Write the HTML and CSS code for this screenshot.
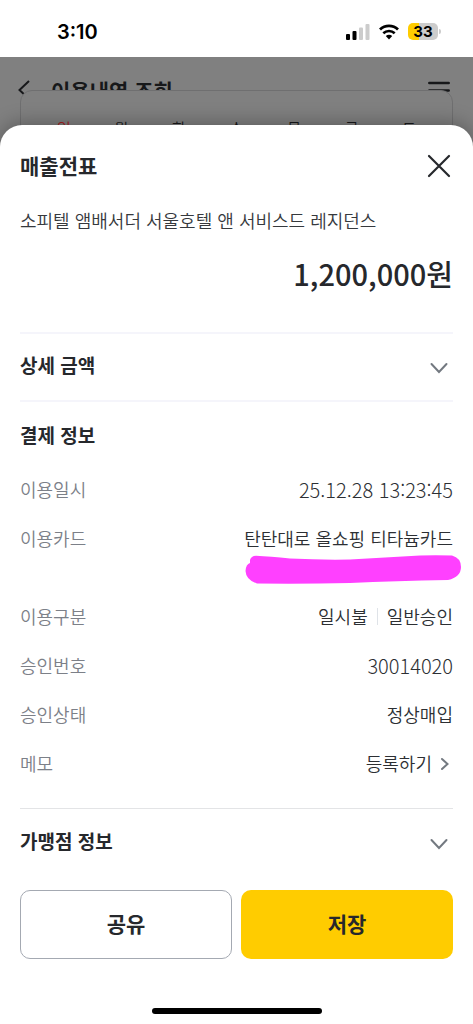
FILE: index.html
```html
<!DOCTYPE html>
<html lang="ko">
<head>
<meta charset="utf-8">
<meta name="viewport" content="width=device-width, initial-scale=1">
<title>매출전표</title>
<link rel="stylesheet" href="styles.css">
</head>
<body>
<div class="status">
  <time class="clock">3:10</time>
  <div class="indicators">
    <svg width="24" height="16" viewBox="0 0 24 16" aria-hidden="true">
      <rect x="0" y="10" width="4" height="6" rx="1"/>
      <rect x="6.5" y="7" width="4" height="9" rx="1"/>
      <rect x="13" y="3.5" width="4" height="12.5" rx="1" fill="#ccc"/>
      <rect x="19.5" y="0" width="4" height="16" rx="1" fill="#ccc"/>
    </svg>
    <svg width="20" height="16" viewBox="0 0 20 16" aria-hidden="true">
      <path d="M1 5.400C6 .6 14 .6 19 5.400" fill="none" stroke="#000" stroke-width="2.800"/>
      <path d="M4.300 9.200C7.500 6.200 12.500 6.200 15.700 9.200" fill="none" stroke="#000" stroke-width="2.600"/>
      <path d="M6.800 12.100C8.600 10.300 11.400 10.300 13.200 12.100L10 15.400Z"/>
    </svg>
    <div class="battery"><span class="level">33</span><i class="tip"></i></div>
  </div>
</div>

<div class="behind" aria-hidden="true">
  <div class="topbar">
    <svg width="12" height="20" viewBox="0 0 12 20" fill="none" stroke="#17181a" stroke-width="2"><path d="M11 1L1.500 10L11 19"/></svg>
    <span class="page-name">이용내역 조회</span>
    <svg width="22" height="18" viewBox="0 0 22 18" stroke="#17181a" stroke-width="2.500" stroke-linecap="round"><path d="M1.300 2H20.700M1.300 9.500H20.700M1.300 17H20.700"/></svg>
  </div>
  <div class="calendar">
    <span class="sunday">일</span><span>월</span><span>화</span><span>수</span><span>목</span><span>금</span><span>토</span>
  </div>
</div>

<main class="sheet">
  <header class="sheet-head">
    <h1>매출전표</h1>
    <button class="plain" type="button" aria-label="닫기">
      <svg width="30" height="30" viewBox="0 0 30 30" fill="none" stroke="#26282c" stroke-width="2.200" stroke-linecap="round"><path d="M6 5L26 25M26 5L6 25"/></svg>
    </button>
  </header>
  <p class="merchant">소피텔 앰배서더 서울호텔 앤 서비스드 레지던스</p>
  <p class="amount">1,200,000원</p>

  <button class="plain fold" type="button" aria-expanded="false">
    <span>상세 금액</span>
    <svg class="chevron" width="30" height="30" viewBox="0 0 30 30"><path d="M8.500 15L16 23L23.500 15"/></svg>
  </button>

  <section class="payment">
    <h2>결제 정보</h2>
    <dl>
      <div class="row"><dt>이용일시</dt><dd class="numeric">25.12.28 13:23:45</dd></div>
      <div class="row"><dt>이용카드</dt>
        <dd class="card">탄탄대로 올쇼핑 티타늄카드
          <svg class="marker" width="217" height="29" viewBox="0 0 217 29" aria-hidden="true"><path d="M5 5Q6 1 11 .8Q25 1.500 45 3.500Q75 5 105 4.500Q140 2.500 175 .5Q190 0 207 .5Q216 3 216 12Q216 22 203 25Q150 26 105 28Q60 29 12 28.500Q1 25 .5 16Q1 9 5 8Z" fill="#ff40ff"/></svg>
        </dd></div>
      <div class="row"><dt>이용구분</dt><dd class="pair"><span>일시불</span><i class="bar"></i><span>일반승인</span></dd></div>
      <div class="row"><dt>승인번호</dt><dd class="numeric">30014020</dd></div>
      <div class="row"><dt>승인상태</dt><dd>정상매입</dd></div>
      <div class="row"><dt>메모</dt><dd>
        <button class="plain memo" type="button">등록하기
          <svg class="chevron" width="10" height="14" viewBox="0 0 10 14"><path d="M2 2L7.500 7L2 12"/></svg>
        </button></dd></div>
    </dl>
  </section>

  <button class="plain fold last" type="button" aria-expanded="false">
    <span>가맹점 정보</span>
    <svg class="chevron" width="30" height="30" viewBox="0 0 30 30"><path d="M8.500 15L16 23L23.500 15"/></svg>
  </button>

  <footer class="actions">
    <button class="action share" type="button">공유</button>
    <button class="action save" type="button">저장</button>
  </footer>
  <div class="home"></div>
</main>
</body>
</html>
```
FILE: styles.css
```css
* {
  box-sizing: border-box;
}

body {
  margin: 0;
  min-height: 100vh;
  display: flex;
  flex-direction: column;
  background: #fff;
  color: #26282c;
  font-family: "Noto Sans CJK KR", sans-serif;
  font-size: 18px;
  font-weight: 350;
  line-height: 29px;
}

h1, h2, p, dl, dd {
  margin: 0;
}

svg {
  display: block;
  flex: none;
}

.plain {
  padding: 0;
  border: 0;
  background: none;
  color: inherit;
  font: inherit;
  cursor: pointer;
}

.status {
  height: 57px;
  padding: 6px 32px 0 57px;
  display: flex;
  align-items: center;
  justify-content: space-between;
  color: #000;
}

.clock {
  font: 600 20px/24px Inter, sans-serif;
}

.indicators {
  display: flex;
  align-items: center;
  gap: 9px;
}

.battery {
  display: flex;
  align-items: center;
  gap: 1px;
}

.level {
  width: 30px;
  border-radius: 5px;
  background: linear-gradient(to right, #fc0 35%, #ccc 35%);
  font: 700 15px/17px Inter, sans-serif;
  text-align: center;
}

.tip {
  width: 2px;
  height: 5px;
  border-radius: 0 2px 2px 0;
  background: #ccc;
}

.behind {
  height: 96px;
  overflow: hidden;
  background: #808080;
  color: #17181a;
}

.topbar {
  height: 66px;
  padding: 0 23px 0 18px;
  display: flex;
  align-items: center;
  gap: 21px;
}

.page-name {
  flex: 1;
  font-size: 21px;
  font-weight: 700;
}

.calendar {
  position: relative;
  height: 80px;
  margin: -33px 20px 0;
  padding: 22px 14px;
  display: grid;
  grid-template-columns: repeat(7, 1fr);
  border: 1px solid #6f6f70;
  border-radius: 12px;
  background: #808080;
  font-size: 15px;
  text-align: center;
}

.sunday {
  color: #a61e1e;
}

.sheet {
  position: relative;
  flex: 1;
  margin-top: -28px;
  padding: 24px 20px 10px;
  display: flex;
  flex-direction: column;
  border-radius: 22px 22px 0 0;
  background: #fff;
  box-shadow: 0 -2px 20px rgba(0, 0, 0, 0.3);
}

.sheet-head {
  height: 34px;
  display: flex;
  align-items: center;
  justify-content: space-between;
}

h1 {
  padding-bottom: 2px;
  font-size: 21px;
  line-height: 32px;
}

.merchant {
  padding-top: 23px;
  color: #36393d;
}

.amount {
  padding: 18px 0 39px;
  border-bottom: 2px solid #f5f5fb;
  font-size: 29px;
  font-weight: 500;
  line-height: 40px;
  text-align: right;
}

.fold {
  height: 68px;
  padding-bottom: 6px;
  display: flex;
  align-items: center;
  justify-content: space-between;
  border-bottom: 2px solid #f5f5fb;
  font-size: 19px;
  font-weight: 700;
}

.chevron {
  fill: none;
  stroke: #737980;
  stroke-width: 2;
  stroke-linecap: round;
}

.payment {
  padding: 18px 0 30px;
  border-bottom: 1px solid #e3e4e6;
}

h2 {
  font-size: 19px;
  line-height: 29px;
}

dl {
  padding-top: 26px;
  display: grid;
  gap: 20px;
}

.row {
  display: flex;
  justify-content: space-between;
}

dt {
  color: #7c8088;
}

dd {
  color: #2c2f33;
  text-align: right;
}

.numeric {
  font-size: 20px;
  font-weight: 300;
}

.card {
  position: relative;
  padding-bottom: 29px;
}

.marker {
  position: absolute;
  right: -9px;
  bottom: -2px;
}

.pair {
  display: flex;
  align-items: center;
  gap: 9px;
}

.bar {
  width: 1px;
  height: 17px;
  background: #dfe3e8;
}

.memo {
  padding-right: 3px;
  display: flex;
  align-items: center;
  gap: 8px;
}

.last {
  border-bottom: 0;
}

.actions {
  margin-top: auto;
  padding-bottom: 49px;
  display: grid;
  grid-template-columns: 1fr 1fr;
  gap: 9px;
}

.action {
  height: 69px;
  padding: 0 0 3px;
  border: 0;
  border-radius: 10px;
  color: #26282c;
  font: inherit;
  font-size: 21px;
  font-weight: 700;
  cursor: pointer;
}

.share {
  border: 1px solid #a4a9b2;
  background: #fff;
}

.save {
  background: #fc0;
}

.home {
  width: 170px;
  height: 6px;
  align-self: center;
  border-radius: 3px;
  background: #000;
}
```
